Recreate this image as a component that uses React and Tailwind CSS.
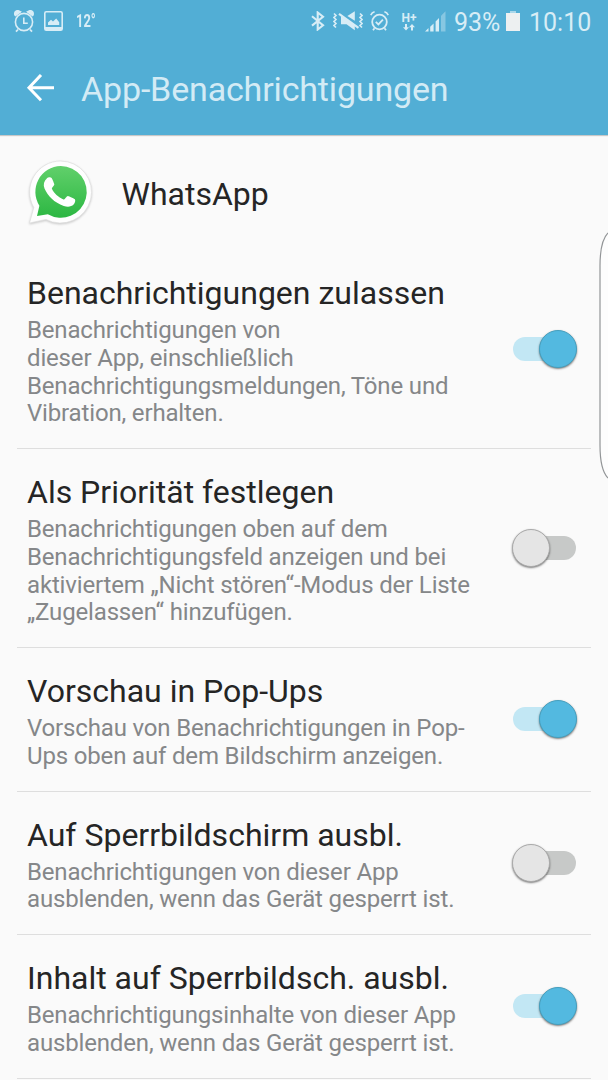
import { Fragment } from 'react'

const settings = [
  {
    title: 'Benachrichtigungen zulassen',
    lines: ['Benachrichtigungen von', 'dieser App, einschließlich', 'Benachrichtigungsmeldungen, Töne und', 'Vibration, erhalten.'],
    enabled: true,
  },
  {
    title: 'Als Priorität festlegen',
    lines: ['Benachrichtigungen oben auf dem', 'Benachrichtigungsfeld anzeigen und bei', 'aktiviertem „Nicht stören“-Modus der Liste', '„Zugelassen“ hinzufügen.'],
    enabled: false,
  },
  {
    title: 'Vorschau in Pop-Ups',
    lines: ['Vorschau von Benachrichtigungen in Pop-', 'Ups oben auf dem Bildschirm anzeigen.'],
    enabled: true,
  },
  {
    title: 'Auf Sperrbildschirm ausbl.',
    lines: ['Benachrichtigungen von dieser App', 'ausblenden, wenn das Gerät gesperrt ist.'],
    enabled: false,
  },
  {
    title: 'Inhalt auf Sperrbildsch. ausbl.',
    lines: ['Benachrichtigungsinhalte von dieser App', 'ausblenden, wenn das Gerät gesperrt ist.'],
    enabled: true,
  },
]

function AlarmIcon() {
  return (
    <svg width="22" height="24" viewBox="0 0 22 24" fill="none" stroke="currentColor">
      <circle cx="11" cy="13" r="8.6" strokeWidth="1.6" />
      <path d="M10.8 8.5v5.8h4" strokeWidth="1.6" />
      <path d="M5 20.5l-2 2.2M17 20.5l2 2.2" strokeWidth="1.8" />
      <path d="M1.2 6.2C.2 2.6 3 .6 6 1.2L9 2.8 2.4 7.6zM20.8 6.2C21.8 2.6 19 .6 16 1.2L13 2.8 19.6 7.6z" fill="currentColor" stroke="none" />
    </svg>
  )
}

function ImageIcon() {
  return (
    <svg width="19" height="20" viewBox="0 0 19 20">
      <rect x=".8" y=".8" width="17.4" height="18.4" rx="1.5" fill="none" stroke="currentColor" strokeWidth="1.6" />
      <path d="M1 16h17v3H1zM4 14v-2.5l3-2.7 2 1.8 3.2-3 3 3.6V14z" fill="currentColor" />
    </svg>
  )
}

function BluetoothIcon() {
  return (
    <svg width="14" height="20" viewBox="0 0 14 20" fill="none" stroke="currentColor" strokeWidth="2.1">
      <path d="M1 5.3l11 9-5.3 4.2v-17L12 5.7 1 14.6" />
    </svg>
  )
}

function MuteVibrateIcon() {
  return (
    <svg width="30" height="20" viewBox="0 0 30 20">
      <path d="M14.4 5L21.8.2v9.6z" fill="currentColor" />
      <path d="M8 5v8.2h5.5l8.300 6v-5.200z" fill="currentColor" />
      <path d="M6 2.800l19.500 14" stroke="currentColor" strokeWidth="2.200" />
      <path d="M1 2.500l2 2-2 2 2 2-2 2 2 2-2 2 2 2M27 2.500l2 2-2 2 2 2-2 2 2 2-2 2 2 2" fill="none" stroke="currentColor" strokeWidth="1.600" />
    </svg>
  )
}

function AlarmCheckIcon() {
  return (
    <svg width="19" height="20" viewBox="0 0 19 20" fill="none" stroke="currentColor">
      <circle cx="9.5" cy="11" r="7.3" strokeWidth="1.8" />
      <path d="M5.8 10.8l2.6 2.6 4.5-4.8" strokeWidth="1.8" />
      <path d="M.7 4.2C1.5 2.5 2.8 1.3 4.600.8M18.300 4.200C17.500 2.500 16.200 1.300 14.400.8M4.500 17.200L3 19.300M14.500 17.200l1.500 2.100" strokeWidth="1.700" />
    </svg>
  )
}

function DataArrowsIcon() {
  return (
    <svg width="12" height="7" viewBox="0 0 12 7" fill="currentColor">
      <path d="M2 0h2v3.300h2L3 6.600 0 3.300h2zM8 6.600h2V3.300h2L9 0 6 3.300h2z" />
    </svg>
  )
}

function SignalIcon() {
  return (
    <svg width="21" height="21" viewBox="0 0 21 21" fill="currentColor">
      <path d="M0 20.500L3.500 17v3.500zM5.200 15.800l3.400-3.300v8H5.200zM10.600 10.500L14 7v13.500h-3.400z" />
      <path d="M16 4.800L20.500.300v20.200H16z" opacity=".4" />
    </svg>
  )
}

function BatteryIcon() {
  return (
    <svg width="14" height="20" viewBox="0 0 14 20">
      <path d="M4 0h6v2H4z" fill="#a9d7ea" />
      <path d="M0 2h14v18H0z" fill="#edf0f1" />
    </svg>
  )
}

function WhatsAppIcon() {
  return (
    <svg className="-mt-[2px] ml-[27px] shrink-0 overflow-visible" width="66" height="66" viewBox="0 0 66 66">
      <defs>
        <linearGradient id="bubble" x1="0" y1="0" x2="0" y2="1">
          <stop offset="0" stopColor="#61d06b" />
          <stop offset="1" stopColor="#2cb742" />
        </linearGradient>
      </defs>
      <path
        className="drop-shadow-[0_1px_1px_rgba(0,0,0,0.2)]"
        d="M33.5 2a31 31 0 1 1-14.5 58.4L2.5 64l4.3-15.5A31 31 0 0 1 33.5 2z"
        fill="#fefefe"
        stroke="#dedede"
        strokeWidth=".7"
      />
      <path d="M33.700 7a25.900 25.900 0 1 1-12.900 48.300L10 57l2.400-10.200A25.900 25.900 0 0 1 33.700 7z" fill="url(#bubble)" />
      <path
        d="M20 19.2c1-1 3.8-1.2 4.6-.3.8.9 2.5 5.3 2.7 6.4.2 1.2-2.7 3.5-2.4 4.5 2 4.5 6.5 8.7 11.6 10.7 1.2.4 3.1-3.8 4.5-3.6 1 .2 6.2 2.7 6.9 3.3.8 1 .1 4-1.3 5.4-2.3 2.2-5.8 2.7-9.8 1.4C27.1 43.5 21 37.5 17.5 29.6c-1.5-4-.6-7.5 2.5-10.4z"
        fill="#fff"
      />
    </svg>
  )
}

function StatusBar() {
  return (
    <div className="flex h-[42px] items-center justify-between pl-[13px] pr-[16px] text-[#d8edf6]">
      <div className="flex items-center">
        <AlarmIcon />
        <span className="ml-[9px]"><ImageIcon /></span>
        <span className="ml-[13px] w-[18px] origin-left scale-x-[0.68] whitespace-nowrap text-[19px] font-bold leading-5">12°</span>
      </div>
      <div className="flex items-center">
        <BluetoothIcon />
        <span className="ml-[8px]"><MuteVibrateIcon /></span>
        <span className="ml-[7px]"><AlarmCheckIcon /></span>
        <div className="ml-[13px] flex w-[15px] flex-col items-center">
          <span className="text-[12px] font-bold leading-[12px]">H+</span>
          <DataArrowsIcon />
        </div>
        <span className="ml-[8px]"><SignalIcon /></span>
        <span className="ml-[8.5px] mt-[3px] w-[46px] whitespace-nowrap text-[25px] leading-7">93%</span>
        <span className="ml-[6px]"><BatteryIcon /></span>
        <span className="ml-[9px] mt-[3px] w-[63px] whitespace-nowrap text-[25px] leading-7">10:10</span>
      </div>
    </div>
  )
}

function Header() {
  return (
    <div className="flex h-[93px] items-start">
      <svg className="ml-[26px] mt-[32px]" width="28" height="28" viewBox="0 0 28 28" fill="none" stroke="#fff" strokeWidth="3">
        <path d="M28 13.700H3M15 1L3 13.700l12 12.500" />
      </svg>
      <h1 className="ml-[27px] mt-[27px] whitespace-nowrap text-[34px] leading-[40px] tracking-[-0.16px] text-[#d3ebf5]">App-Benachrichtigungen</h1>
    </div>
  )
}

function Toggle({ enabled }) {
  return enabled ? (
    <div className="mb-[4px] flex h-[38px] w-[65px] items-center justify-end">
      <div className="-mr-[20px] h-6 w-[46px] rounded-l-full bg-[#c2e7f4]" />
      <div className="z-10 h-[38px] w-[38px] shrink-0 rounded-full border border-[#459fbe] bg-[#53b9e0] shadow-[0_1px_2px_rgba(0,0,0,0.5)]" />
    </div>
  ) : (
    <div className="mb-[4px] flex h-[38px] w-[65px] items-center">
      <div className="z-10 h-[38px] w-[38px] shrink-0 rounded-full border border-[#aaaaaa] bg-[#e5e5e5] shadow-[0_1px_2px_rgba(0,0,0,0.5)]" />
      <div className="-ml-[20px] h-6 w-[46px] rounded-r-full bg-[#c7c9c8]" />
    </div>
  )
}

function SettingRow({ title, lines, enabled }) {
  return (
    <div className="mx-[17px] flex items-center justify-between border-b border-[#dedede] pb-[20.1px] pl-[10px] pr-[14px] pt-[24px]">
      <div className="whitespace-nowrap">
        <h2 className="text-[32px] leading-[38px] text-[#252525]">{title}</h2>
        <p className="mt-[5px] text-[24px] leading-[27.7px] tracking-[-0.16px] text-[#858789]">
          {lines.map((line, i) => (
            <Fragment key={i}>
              {line}
              {i < lines.length - 1 && <br />}
            </Fragment>
          ))}
        </p>
      </div>
      <Toggle enabled={enabled} />
    </div>
  )
}

export default function App() {
  return (
    <div className="relative h-[1080px] w-[608px] overflow-hidden bg-[#fafafa] font-[Roboto,sans-serif]">
      <header className="h-[135px] bg-[#52aed5] shadow-[0_1px_1px_rgba(0,0,0,0.2)]">
        <StatusBar />
        <Header />
      </header>
      <div className="flex h-[115.2px] items-center">
        <WhatsAppIcon />
        <span className="ml-[28.5px] mt-[2px] text-[32px] leading-[38px] text-[#252525]">WhatsApp</span>
      </div>
      <main>
        {settings.map((item) => (
          <SettingRow key={item.title} {...item} />
        ))}
      </main>
      {/* edge panel handle */}
      <svg className="absolute right-0 top-[230px]" width="9" height="251" viewBox="0 0 9 251">
        <path d="M9 3C3 9 1 20 1 36v179c0 16 2 27 8 33" fill="#fdfdfd" stroke="#929597" strokeWidth="1.2" />
      </svg>
    </div>
  )
}
